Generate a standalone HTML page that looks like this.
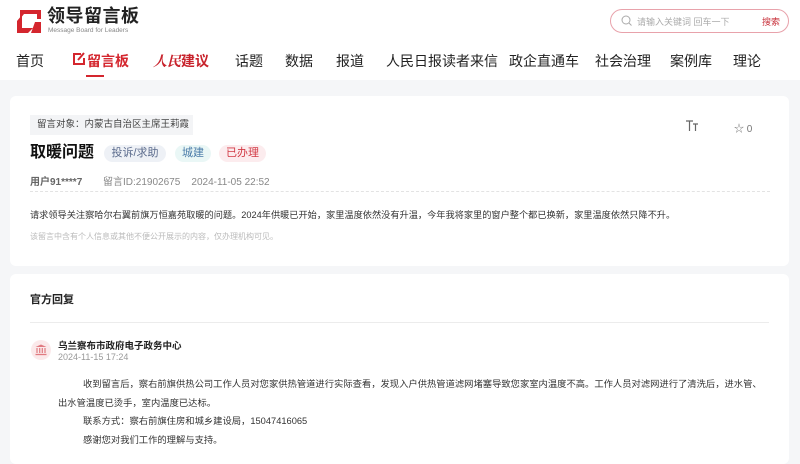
<!DOCTYPE html>
<html><head><meta charset="utf-8"><style>
*{margin:0;padding:0;box-sizing:border-box}
body{width:800px;height:455px;overflow:hidden;background:#f5f6f8;font-family:"Liberation Sans","Noto Sans CJK SC",sans-serif;color:#333;position:relative}
.a{position:absolute;white-space:nowrap}
.hdr{position:absolute;left:0;top:0;width:800px;height:80px;background:#fff}
.card{position:absolute;left:10px;width:779px;background:#fff;border-radius:6px}
.nav{font-size:14px;color:#222;top:51px}
.tag{position:absolute;top:145px;height:17px;border-radius:9px;font-size:11px;line-height:17px;text-align:center}
</style></head><body>
<div class="hdr"></div>
<svg class="a" style="left:16px;top:9px" width="27" height="25" viewBox="0 0 27 25"><path d="M4 1h21v9h-4V5H8l-4 5z" fill="#d4262e"/><path d="M1 12l5-6v13h11l-5 5H1z" fill="#d4262e"/><path d="M19 13h6v11h-10z" fill="#d4262e"/></svg>
<div class="a" style="left:47px;top:5px;font-size:18px;line-height:22px;font-weight:bold;color:#222;letter-spacing:0.5px">领导留言板</div>
<div class="a" style="left:48px;top:27px;font-size:6.5px;line-height:8px;color:#888">Message Board for Leaders</div>
<div class="a" style="left:610px;top:9px;width:179px;height:24px;border:1px solid #e8a2ab;border-radius:12px"></div>
<svg class="a" style="left:621px;top:15px" width="11" height="11" viewBox="0 0 11 11"><circle cx="5" cy="5" r="4" fill="none" stroke="#aaa" stroke-width="1"/><path d="M8 8l2.5 2.5" stroke="#aaa"/></svg>
<div class="a" style="left:637px;top:15px;font-size:9px;color:#aaa">请输入关键词 回车一下</div>
<div class="a" style="left:762px;top:15px;font-size:9px;color:#c8303a">搜索</div>
<div class="a nav" style="left:16px">首页</div>
<svg class="a" style="left:72px;top:52px" width="14" height="14" viewBox="0 0 14 14"><path d="M9 2H2v10h10V6" fill="none" stroke="#d4262e" stroke-width="2"/><path d="M6 8l6-7" stroke="#d4262e" stroke-width="2"/></svg>
<div class="a nav" style="left:87px;color:#d4262e;font-weight:bold">留言板</div>
<div class="a" style="left:86px;top:75px;width:18px;height:2px;background:#d4262e"></div>
<div class="a nav" style="left:153px;color:#c8232c;font-weight:bold;font-style:italic;font-family:'Noto Serif CJK SC',serif">人民<span style="font-style:normal;font-family:'Liberation Sans','Noto Sans CJK SC',sans-serif">建议</span></div>
<div class="a nav" style="left:235px">话题</div>
<div class="a nav" style="left:285px">数据</div>
<div class="a nav" style="left:336px">报道</div>
<div class="a nav" style="left:386px">人民日报读者来信</div>
<div class="a nav" style="left:509px">政企直通车</div>
<div class="a nav" style="left:595px">社会治理</div>
<div class="a nav" style="left:670px">案例库</div>
<div class="a nav" style="left:733px">理论</div>

<div class="card" style="top:96px;height:170px"></div>
<div class="a" style="left:30px;top:115px;width:163px;height:20px;background:#f3f4f6;font-size:9.5px;line-height:20px;padding-left:7px;color:#444">留言对象：内蒙古自治区主席王莉霞</div>
<div class="a" style="left:30px;top:142px;font-size:16px;line-height:22px;font-weight:bold;color:#111">取暖问题</div>
<div class="tag" style="left:104px;width:62px;background:#eef1f6;color:#5b6b8c">投诉/求助</div>
<div class="tag" style="left:175px;width:36px;background:#eaf7f6;color:#4a7ba8">城建</div>
<div class="tag" style="left:219px;width:47px;background:#fcecee;color:#d23a45">已办理</div>
<div class="a" style="left:30px;top:173px;font-size:10px;color:#666;font-weight:bold">用户91****7</div>
<div class="a" style="left:103px;top:173px;font-size:10px;color:#888">留言ID:21902675&nbsp;&nbsp;&nbsp; 2024-11-05 22:52</div>
<div class="a" style="left:30px;top:191px;width:740px;border-top:1px dashed #e3e3e3"></div>
<div class="a" style="left:30px;top:207px;font-size:9.2px;color:#333">请求领导关注察哈尔右翼前旗万恒嘉苑取暖的问题。2024年供暖已开始，家里温度依然没有升温，今年我将家里的窗户整个都已换新，家里温度依然只降不升。</div>
<div class="a" style="left:30px;top:231px;font-size:8px;color:#bbb">该留言中含有个人信息或其他不便公开展示的内容，仅办理机构可见。</div>
<svg class="a" style="left:685px;top:120px" width="14" height="11" viewBox="0 0 14 11"><path d="M1 1h7M4.5 1v10M8 4h5M10.5 4v7" stroke="#666" stroke-width="1.2" fill="none"/></svg>
<div class="a" style="left:734px;top:120px;font-size:10px;color:#777">☆ 0</div>

<div class="card" style="top:274px;height:190px"></div>
<div class="a" style="left:30px;top:291px;font-size:11px;font-weight:bold;color:#222">官方回复</div>
<div class="a" style="left:30px;top:322px;width:739px;height:1px;background:#ececec"></div>
<div class="a" style="left:31px;top:340px;width:20px;height:20px;border-radius:50%;background:#fbe9ea"></div>
<svg class="a" style="left:35px;top:344px" width="12" height="12" viewBox="0 0 12 12"><path d="M6 0.5L11.5 3H0.5z" fill="#e07a80"/><path d="M2 4v5M4.7 4v5M7.3 4v5M10 4v5" stroke="#e07a80" stroke-width="1.2"/><path d="M0.5 10.5h11" stroke="#e07a80" stroke-width="1.3"/></svg>
<div class="a" style="left:58px;top:338px;font-size:9.5px;font-weight:bold;color:#222">乌兰察布市政府电子政务中心</div>
<div class="a" style="left:58px;top:352px;font-size:9px;color:#999">2024-11-15 17:24</div>
<div class="a" style="left:83px;top:376px;font-size:9.3px;color:#333">收到留言后，察右前旗供热公司工作人员对您家供热管道进行实际查看，发现入户供热管道滤网堵塞导致您家室内温度不高。工作人员对滤网进行了清洗后，进水管、</div>
<div class="a" style="left:58px;top:395px;font-size:9.3px;color:#333">出水管温度已烫手，室内温度已达标。</div>
<div class="a" style="left:83px;top:413px;font-size:9.3px;color:#333">联系方式：察右前旗住房和城乡建设局，15047416065</div>
<div class="a" style="left:83px;top:432px;font-size:9.3px;color:#333">感谢您对我们工作的理解与支持。</div>
</body></html>
